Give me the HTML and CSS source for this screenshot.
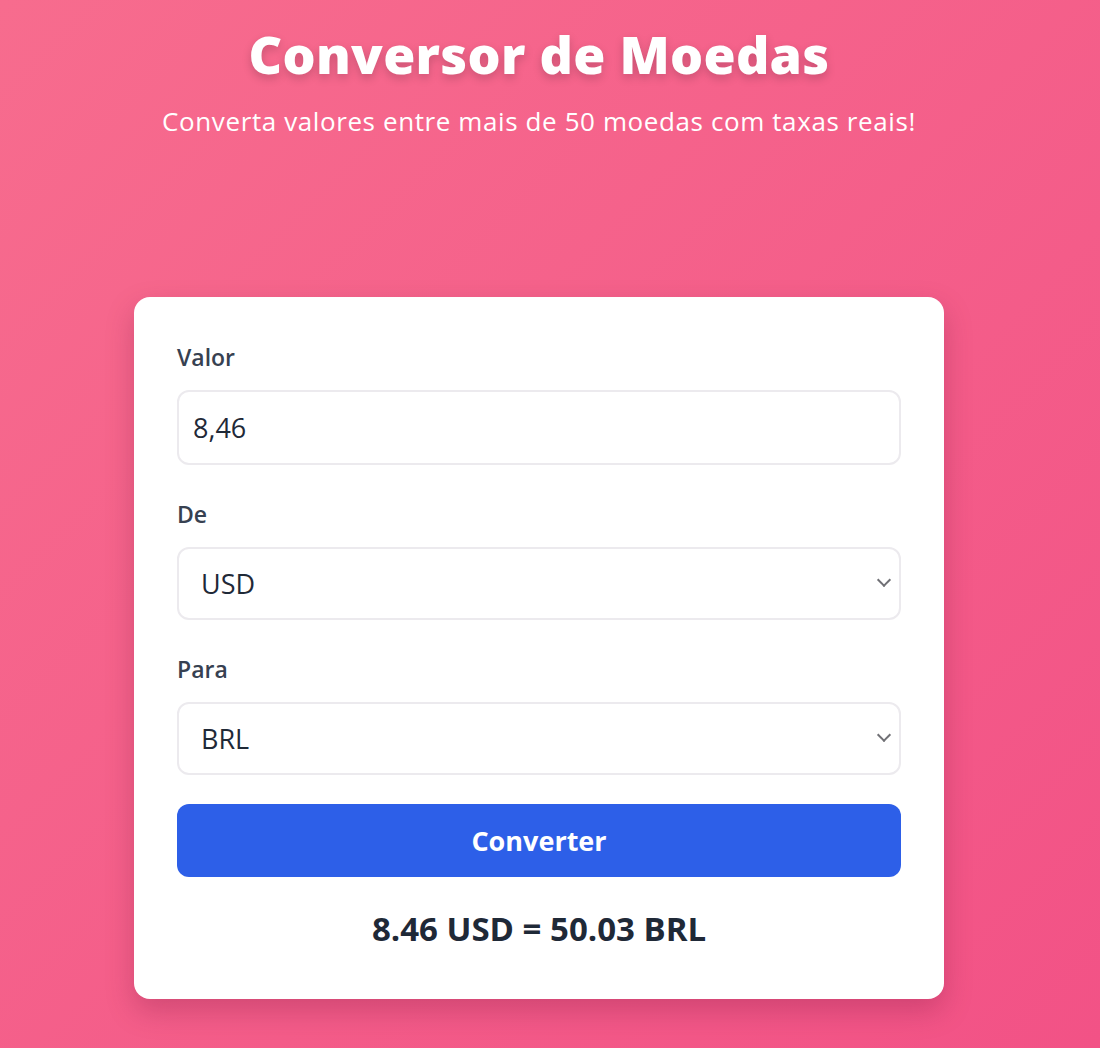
FILE: index.html
```html
<!DOCTYPE html>
<html lang="pt-BR">
<head>
    <meta charset="UTF-8">
    <meta name="viewport" content="width=device-width, initial-scale=1.0">
    <title>Conversor de Moedas</title>
    <link rel="stylesheet" href="styles.css">
</head>
<body>
    <div class="header">
        <h1>Conversor de Moedas</h1>
        <p>Converta valores entre mais de 50 moedas com taxas reais!</p>
    </div>

    <div class="converter">
        <div class="field">
            <label for="valor">Valor</label>
            <input type="text" id="valor" value="8,46">
        </div>

        <div class="field">
            <label for="de">De</label>
            <div class="select-wrap">
                <select id="de">
                    <option value="USD" selected>USD</option>
                    <option value="BRL">BRL</option>
                    <option value="EUR">EUR</option>
                </select>
            </div>
        </div>

        <div class="field">
            <label for="para">Para</label>
            <div class="select-wrap">
                <select id="para">
                    <option value="BRL" selected>BRL</option>
                    <option value="USD">USD</option>
                    <option value="EUR">EUR</option>
                </select>
            </div>
        </div>

        <button type="button" class="convert-btn">Converter</button>

        <div class="result">8.46 USD = 50.03 BRL</div>
    </div>
</body>
</html>
```

FILE: styles.css
```css
*, *::after, *::before {
    box-sizing: border-box;
}

body {
    font-family: 'Open Sans', 'Noto Sans', sans-serif;
    margin: 0;
    min-height: 1048px;
    background: linear-gradient(135deg, #f76c8e, #f25286);
    color: #1f2937;
}

.header {
    width: 1078px;
    text-align: center;
    color: white;
    padding-top: 22px;
}
.header h1 {
    font-weight: 800;
    font-size: 52px;
    margin: 0;
    line-height: 64px;
    letter-spacing: 0.3px;
    text-shadow: 0 4px 10px rgba(0, 0, 0, 0.18);
}
.header p {
    margin: 18px 0 0;
    font-size: 26px;
    line-height: 34px;
    letter-spacing: 0.6px;
}

.converter {
    background: white;
    width: 810px;
    margin: 159px 0 0 134px;
    padding: 44px 43px 50px 43px;
    border-radius: 16px;
    box-shadow: 0 12px 28px rgba(120, 20, 60, 0.28);
}

.field {
    margin-bottom: 33px;
}
.field label {
    display: block;
    font-size: 23px;
    font-weight: 600;
    line-height: 32px;
    color: #374151;
    margin-bottom: 17px;
}
.field input,
.field select {
    width: 100%;
    height: 73px;
    border: 2px solid #eceaee;
    border-radius: 12px;
    padding: 0 14px;
    font-family: inherit;
    font-size: 27px;
    color: #1f2937;
    background: white;
    outline: none;
}
.field input {
    height: 75px;
}

.select-wrap {
    position: relative;
}
.field select {
    appearance: none;
    padding-left: 22px;
}
.select-wrap::after {
    content: "";
    position: absolute;
    right: 12px;
    top: 28px;
    width: 10px;
    height: 10px;
    border-right: 2.5px solid #707075;
    border-bottom: 2.5px solid #707075;
    transform: rotate(45deg);
    pointer-events: none;
}

.field:nth-of-type(3) {
    margin-bottom: 29px;
}

.convert-btn {
    width: 100%;
    height: 73px;
    border: none;
    border-radius: 12px;
    background-color: #2d5fe8;
    color: white;
    font-family: inherit;
    font-size: 27px;
    font-weight: 700;
}

.result {
    text-align: center;
    font-size: 33px;
    font-weight: 700;
    line-height: 40px;
    margin-top: 32px;
}
```
